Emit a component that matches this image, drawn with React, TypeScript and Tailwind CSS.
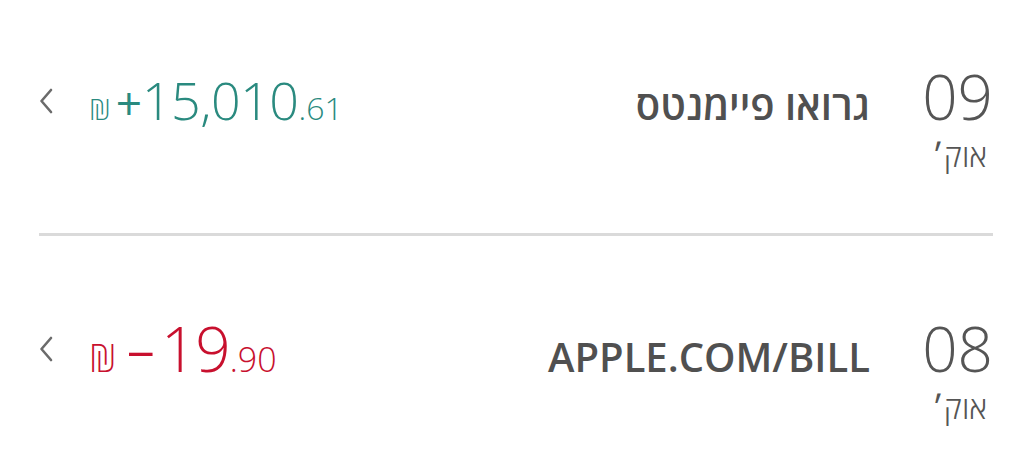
import React from 'react'

type Tx = {
  day: string
  month: string
  name: string
  sign: string
  whole: string
  cents: string
  color: string
  big?: boolean
}

function Chevron() {
  return (
    <svg width="14" height="26" viewBox="0 0 14 26" fill="none" stroke="#6b6b6b" strokeWidth="2.6" strokeLinecap="round" strokeLinejoin="round">
      <path d="M12 2 2.5 13 12 24" />
    </svg>
  )
}

function Row({ tx, className }: { tx: Tx; className: string }) {
  return (
    <div dir="rtl" className={`flex items-baseline ${className}`}>
      {/* Date */}
      <div className="w-[76px] shrink-0 flex flex-col text-[#555555]">
        <span className="text-[62px] leading-none font-light">{tx.day}</span>
        <span className="text-[31px] leading-none font-light mt-[13px] mr-[6px]">{tx.month}</span>
      </div>

      {/* Merchant */}
      <span className="mr-[47px] text-[40px] leading-none font-semibold text-[#505050]">{tx.name}</span>

      {/* Amount */}
      <div dir="ltr" className="mr-auto flex items-baseline">
        <span className="self-center mt-[2px]">
          <Chevron />
        </span>
        <span className="ml-[36px] leading-none font-light whitespace-nowrap" style={{ color: tx.color }}>
          <span className={tx.big ? 'text-[38px]' : 'text-[30px]'}>₪</span>
          <span className={tx.big ? 'text-[50px] font-normal ml-[10px] mr-[6px]' : 'text-[46px] font-normal ml-[5px]'}>{tx.sign}</span>
          <span className={tx.big ? 'text-[62px] tracking-[-1px]' : 'text-[52px] tracking-[-0.5px]'}>{tx.whole}</span>
          <span className={tx.big ? 'text-[34px]' : 'text-[32px]'}>{tx.cents}</span>
        </span>
      </div>
    </div>
  )
}

export default function App() {
  const rows: Tx[] = [
    { day: '09', month: 'אוק׳', name: 'גרואו פיימנטס', sign: '+', whole: '15,010', cents: '.61', color: '#2a8a7f' },
    { day: '08', month: 'אוק׳', name: 'APPLE.COM/BILL', sign: '−', whole: '19', cents: '.90', color: '#c8102e', big: true },
  ]

  return (
    <div className="w-[1024px] h-[469px] overflow-hidden bg-white pl-[39px] pr-[31px]" style={{ fontFamily: '"Open Sans", "Noto Sans", "DejaVu Sans", sans-serif' }}>
      <Row tx={rows[0]} className="pt-[65px] pb-[62px]" />
      <div className="h-[3px] bg-[#dadada]" />
      <Row tx={rows[1]} className="pt-[81px]" />
    </div>
  )
}
